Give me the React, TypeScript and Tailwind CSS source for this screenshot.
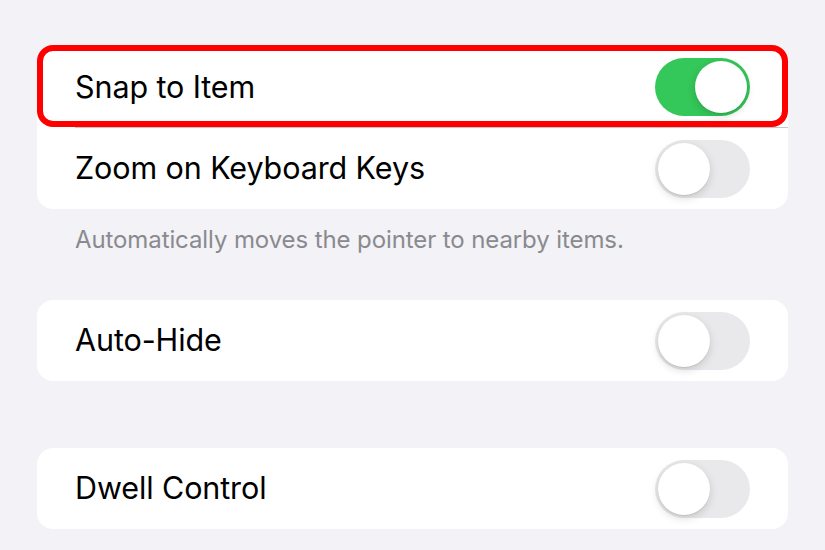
import React from 'react';

interface RowProps {
  label: string;
  on?: boolean;
  divider?: boolean;
}

function Toggle({ on }: { on?: boolean }) {
  return (
    <div
      className={
        'flex h-[58px] w-[95px] shrink-0 items-center rounded-full px-[3px] ' +
        (on ? 'justify-end bg-[#34c759]' : 'justify-start bg-[#e9e9eb]')
      }
    >
      <div className="h-[52px] w-[52px] rounded-full bg-white shadow-[0_3px_8px_rgba(0,0,0,0.15),0_1px_1px_rgba(0,0,0,0.08)]" />
    </div>
  );
}

function Row({ label, on, divider }: RowProps) {
  return (
    <div className="pl-[38px]">
      <div
        className={
          'flex h-[81px] items-center justify-between pr-[38px] ' +
          (divider ? 'border-b border-[#c6c6c8]' : '')
        }
      >
        <span className="text-[30.5px] leading-none tracking-[-0.1px] text-black">{label}</span>
        <Toggle on={on} />
      </div>
    </div>
  );
}

export default function App() {
  return (
    <div
      className="min-h-[550px] bg-[#f2f2f7] px-[37px] pt-[47px]"
      style={{ fontFamily: 'Inter, "Liberation Sans", sans-serif' }}
    >
      <div className="relative rounded-[16px] bg-white">
        <Row label="Snap to Item" on divider />
        <Row label="Zoom on Keyboard Keys" />
        {/* highlight drawn over the first row */}
        <div className="pointer-events-none absolute left-0 right-0 top-[-2px] h-[82px] rounded-[16px] border-[6px] border-[#ff0000]" />
      </div>
      <p className="pl-[38px] pt-[17px] text-[24px] leading-[28px] tracking-[-0.1px] text-[#8a8a8e]">
        Automatically moves the pointer to nearby items.
      </p>
      <div className="mt-[46px] rounded-[16px] bg-white">
        <Row label="Auto-Hide" />
      </div>
      <div className="mt-[67px] rounded-[16px] bg-white">
        <Row label="Dwell Control" />
      </div>
    </div>
  );
}
